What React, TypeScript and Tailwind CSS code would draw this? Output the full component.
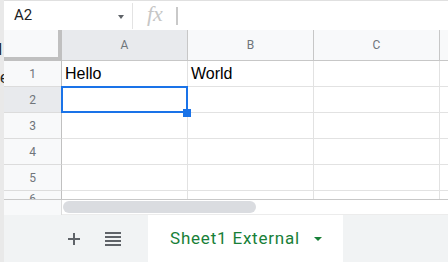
import React from "react";

const rows = [1, 2, 3, 4, 5];
const cols = ["A", "B", "C"];

export default function App() {
  return (
    <div className="w-[448px] h-[262px] flex overflow-hidden bg-white" style={{ fontFamily: "Roboto, 'Liberation Sans', sans-serif" }}>
      {/* clipped strip of outer content */}
      <div className="w-[4px] shrink-0 bg-[#e9e9e9] overflow-hidden flex flex-col items-end text-[16px] leading-[16px] text-[#222]" style={{ fontFamily: "'Liberation Sans', Arial, sans-serif" }}>
        <span className="whitespace-nowrap mt-[42px] mr-[2px]">Label</span>
        <span className="whitespace-nowrap mt-[12px] -mr-[5px]">Name</span>
      </div>
      <div className="flex-1 flex flex-col min-w-0">
        {/* formula bar */}
        <div className="h-[30px] shrink-0 border-t border-[#e0e0e0] flex items-center">
          <div className="w-[128px] h-full flex items-center pl-[10px] pr-[8px]">
            <span className="text-[15px] text-[#202124]">A2</span>
            <span className="ml-auto w-0 h-0 border-l-[3px] border-r-[3px] border-t-[4px] border-l-transparent border-r-transparent border-t-[#5f6368] mt-[2px]"></span>
          </div>
          <div className="w-px h-[26px] bg-[#e3e3e3]"></div>
          <span className="ml-[14px] text-[22px] leading-none italic text-[#c6c6c6] -mt-[3px]" style={{ fontFamily: "'Liberation Serif', 'DejaVu Serif', serif" }}>fx</span>
          <div className="ml-[13px] w-[2px] h-[18px] bg-[#c9c9c9]"></div>
        </div>
        {/* grid */}
        <div className="flex flex-col text-[12px] text-[#70757a]">
          <div className="flex h-[31px]">
            <div className="w-[58px] shrink-0 bg-[#f8f9fa] border-r-[4px] border-b-[4px] border-[#c0c0c0]"></div>
            {cols.map((c) => (
              <div key={c} className={`w-[126px] shrink-0 border-r border-b border-[#c7c7c7] flex items-center justify-center ${c === "A" ? "bg-[#e8eaed]" : "bg-[#f8f9fa]"}`}>
                {c}
              </div>
            ))}
            <div className="flex-1 bg-[#f8f9fa] border-b border-[#c7c7c7]"></div>
          </div>
          {rows.map((r) => (
            <div key={r} className="flex h-[26px]">
              <div className={`w-[58px] shrink-0 border-r border-b border-r-[#c0c0c0] border-b-[#dcdcdc] flex items-center justify-center ${r === 2 ? "bg-[#e8eaed]" : "bg-[#f8f9fa]"}`}>
                {r}
              </div>
              {cols.map((c) => (
                <div key={c} className="relative w-[126px] shrink-0 border-r border-b border-[#e2e2e2] flex items-end pl-[3px] pb-[2px] text-[16px] leading-[20px] text-black" style={{ fontFamily: "'Liberation Sans', Arial, sans-serif" }}>
                  {r === 1 && c === "A" ? "Hello" : r === 1 && c === "B" ? "World" : ""}
                  {r === 2 && c === "A" && (
                    <div className="absolute z-10 -top-px -left-px right-[-1px] -bottom-px border-2 border-[#1a73e8]">
                      <div className="absolute -right-[5px] -bottom-[6px] w-[8px] h-[8px] bg-[#1a73e8]"></div>
                    </div>
                  )}
                </div>
              ))}
              <div className="flex-1 border-b border-[#e2e2e2]"></div>
            </div>
          ))}
          <div className="flex h-[8px] overflow-hidden">
            <div className="w-[58px] shrink-0 bg-[#f8f9fa] border-r border-[#c0c0c0] flex justify-center">
              <span className="mt-[2px] leading-[12px]">6</span>
            </div>
            {cols.map((c) => (
              <div key={c} className="w-[126px] shrink-0 border-r border-[#e2e2e2]"></div>
            ))}
          </div>
          {/* horizontal scrollbar */}
          <div className="flex h-[16px] border-t border-[#c8c8c8]">
            <div className="w-[58px] shrink-0 bg-[#f8f9fa] border-r border-[#dcdcdc]"></div>
            <div className="flex-1 flex items-center pl-px border-b border-[#ececec]">
              <div className="w-[193px] h-[12px] rounded-full bg-[#dadce0]"></div>
            </div>
          </div>
        </div>
        {/* tab bar */}
        <div className="flex-1 bg-[#f1f3f4] flex items-stretch">
          <div className="w-[144px] flex items-center">
            <span className="ml-[64px] text-[#5f6368]">
              <svg width="12" height="12" viewBox="0 0 12 12"><path d="M5 0h2v5h5v2H7v5H5V7H0V5h5z" fill="#5f6368" /></svg>
            </span>
            <span className="ml-[25px]">
              <svg width="16" height="14" viewBox="0 0 16 14"><path d="M0 0h16v2H0zM0 4h16v2H0zM0 8h16v2H0zM0 12h16v2H0z" fill="#5f6368" /></svg>
            </span>
          </div>
          <div className="w-[195px] bg-white flex items-center pl-[22px]">
            <span className="text-[17px] font-normal tracking-[0.8px] text-[#188038]">Sheet1 External</span>
            <span className="ml-[14px] w-0 h-0 border-l-[4px] border-r-[4px] border-t-[4px] border-l-transparent border-r-transparent border-t-[#188038] mt-[1px]"></span>
          </div>
        </div>
      </div>
    </div>
  );
}
